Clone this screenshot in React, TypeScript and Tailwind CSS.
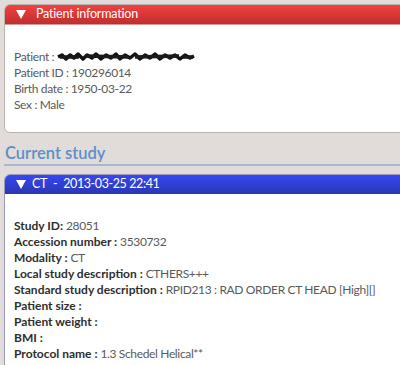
import React from "react";

function Tri() {
  return (
    <svg width="10" height="9" viewBox="0 0 10 9" className="shrink-0">
      <polygon points="0,0 10,0 5,9" fill="#ffffff" />
    </svg>
  );
}

function Scribble() {
  return (
    <svg width="138" height="10" viewBox="0 0 138 10" className="ml-[3px]">
      <path
        d="M1 5 L5 3 L9 7 L13 3 L17 6 L21 2 L26 7 L30 3 L35 6 L39 2 L44 7 L49 3 L54 6 L59 2 L63 7 L68 3 L73 6 L78 2 L83 7 L88 3 L93 6 L98 2 L103 7 L108 3 L113 6 L118 3 L123 7 L128 3 L133 6 L137 4"
        stroke="#111"
        strokeWidth="3.5"
        fill="none"
        strokeLinejoin="round"
      />
      <path
        d="M3 5 L22 5 M28 4 L72 5 M78 5 L122 4 M126 5 L136 5"
        stroke="#1a1a1a"
        strokeWidth="3.5"
        fill="none"
      />
    </svg>
  );
}

const font = { fontFamily: "Lato, 'Noto Sans', sans-serif" };

function Row({ label, value }: { label: string; value: string }) {
  return (
    <div className="h-[16px] leading-[16px] whitespace-nowrap">
      <span className="font-bold text-[#2e2e2e] tracking-[0px]">{label}</span>
      <span className="text-[#5a5a5a]">{value}</span>
    </div>
  );
}

export default function App() {
  return (
    <div
      className="w-[400px] h-[365px] overflow-hidden bg-[#e1dcd9] text-[12px] tracking-[-0.35px]"
      style={font}
    >
      <div className="pt-[4px] pl-[4px]">
        {/* Patient panel */}
        <div className="w-[420px] rounded-tl-[6px] rounded-bl-[6px] overflow-hidden border border-[#b9b3b0] bg-white">
          <div className="h-[20px] flex items-center gap-[10px] pl-[11px] bg-gradient-to-b from-[#f24040] to-[#bf2f2f] border-b border-[#d89a9a] text-white text-[12.5px] tracking-[-0.2px]">
            <Tri />
            <span>Patient information</span>
          </div>
          <div className="pt-[24px] pb-[19px] pl-[9px] text-[#5a5a5a]">
            <div className="h-[16px] leading-[16px] flex items-center whitespace-nowrap">
              <span>Patient :</span>
              <Scribble />
            </div>
            <div className="h-[16px] leading-[16px]">Patient ID : 190296014</div>
            <div className="h-[16px] leading-[16px]">Birth date : 1950-03-22</div>
            <div className="h-[16px] leading-[16px]">Sex : Male</div>
          </div>
        </div>

        {/* Current study heading */}
        <div className="mt-[9px] h-[22px] flex items-center pl-[1px] text-[16.5px] font-semibold tracking-[0px] text-[#5b8fca] leading-none">
          Current study
        </div>
        <div className="h-[2px] bg-[#a7b9d2]" />

        {/* Study panel */}
        <div className="mt-[8px] w-[420px] rounded-tl-[6px] overflow-hidden border border-[#9a9ab8] bg-white">
          <div className="h-[19px] flex items-center pl-[11px] bg-gradient-to-b from-[#3646f4] to-[#2b37b2] text-white text-[12.5px] tracking-[-0.4px] whitespace-nowrap">
            <Tri />
            <span className="ml-[6px]">CT</span>
            <span className="ml-[6px]">-</span>
            <span className="ml-[6px]">2013-03-25 22:41</span>
          </div>
          <div className="pt-[24px] pl-[9px] pb-[20px]">
            <Row label="Study ID: " value="28051" />
            <Row label="Accession number : " value="3530732" />
            <Row label="Modality : " value="CT" />
            <Row label="Local study description : " value="CTHERS+++" />
            <Row
              label="Standard study description : "
              value="RPID213 : RAD ORDER CT HEAD [High][]"
            />
            <Row label="Patient size : " value="" />
            <Row label="Patient weight : " value="" />
            <Row label="BMI : " value="" />
            <Row label="Protocol name : " value="1.3 Schedel Helical**" />
          </div>
        </div>
      </div>
    </div>
  );
}
